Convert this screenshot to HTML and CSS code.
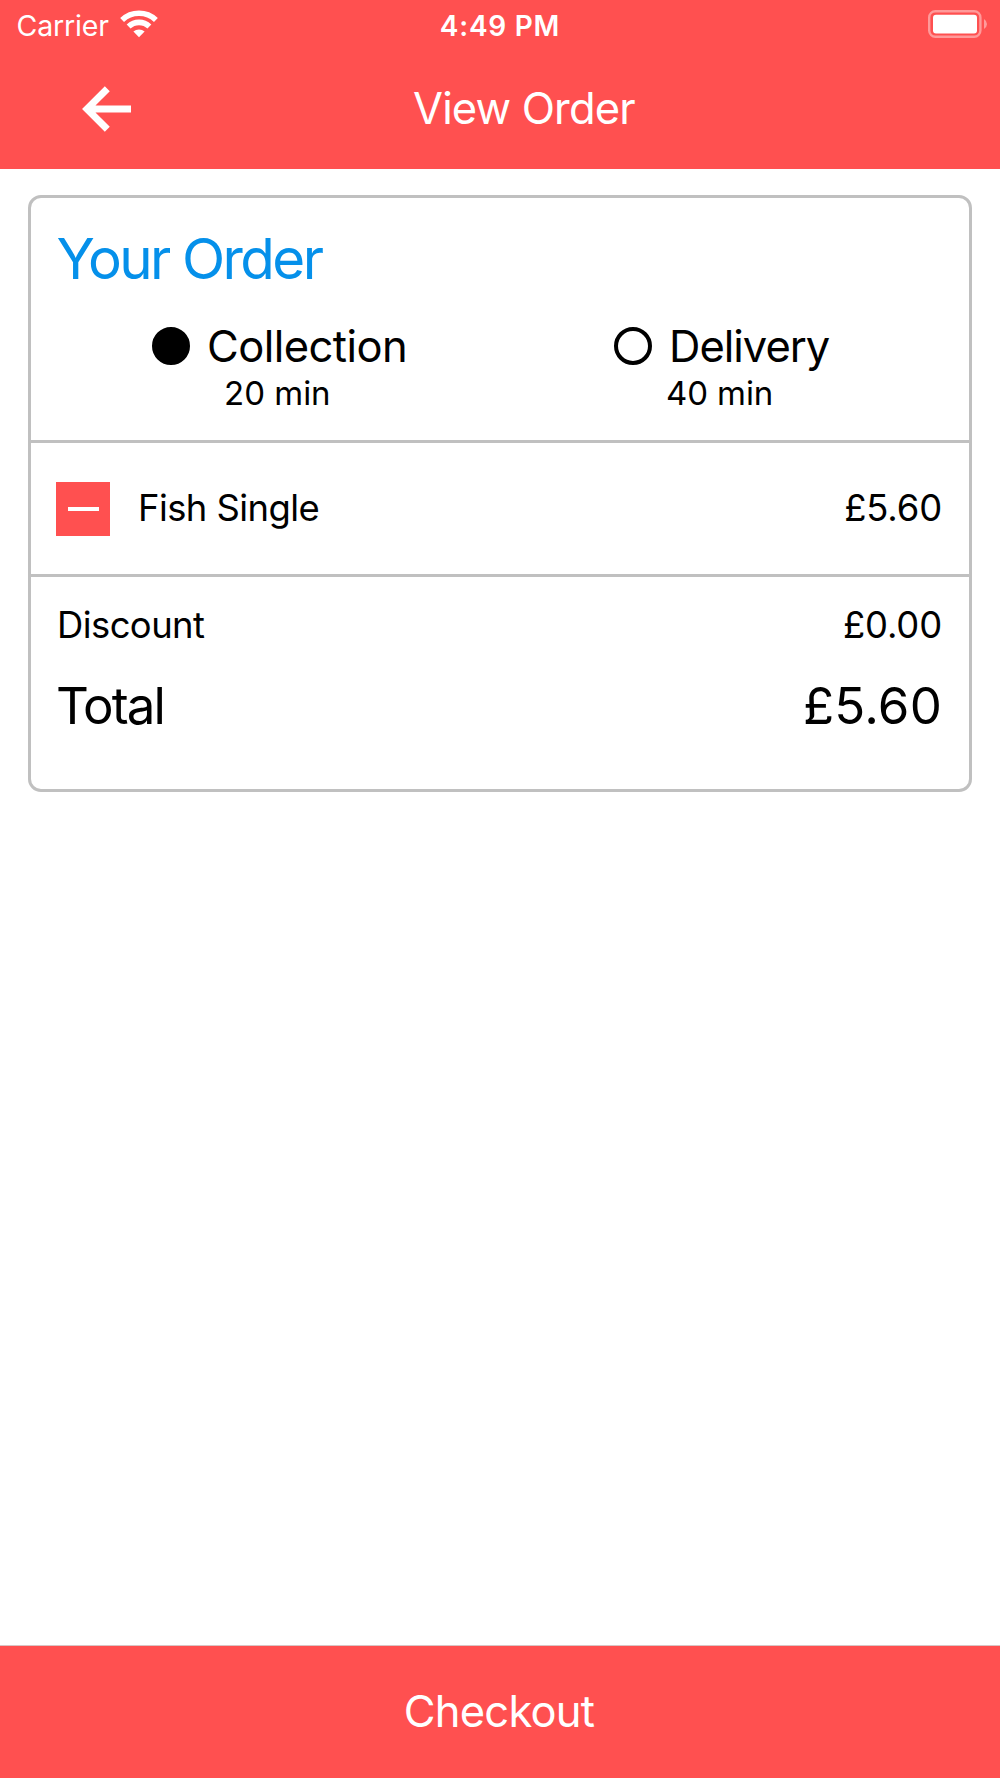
FILE: index.html
```html
<!DOCTYPE html>
<html lang="en">
<head>
  <meta charset="utf-8">
  <title>View Order</title>
  <link rel="stylesheet" href="styles.css">
</head>
<body>
  <div class="screen">
    <header class="header">
      <div class="status">
        <div class="status-left">
          <span class="carrier">Carrier</span>
          <svg class="wifi" width="38" height="28" viewBox="0 0 38 28" fill="none" stroke="#fff">
            <path d="M2.1 10 A24.6 24.6 0 0 1 35.9 10" stroke-width="5.6"/>
            <path d="M8.6 16.5 A15.2 15.2 0 0 1 29.4 16.5" stroke-width="5.6"/>
            <path d="M13.4 21.6 A8.2 8.2 0 0 1 24.6 21.6 L19 27.3 Z" fill="#fff" stroke="none"/>
          </svg>
        </div>
        <span class="time">4:49 PM</span>
        <svg class="battery" width="60" height="28" viewBox="0 0 60 28">
          <rect x="1.2" y="1.2" width="51.2" height="25.6" rx="6.2" fill="none" stroke="#ff9a9a" stroke-width="2.4"/>
          <rect x="5" y="4.8" width="44" height="18.6" rx="3" fill="#fff"/>
          <path d="M56 9 Q59 11 59 14 Q59 17 56 19 Z" fill="#ff9a9a"/>
        </svg>
      </div>
      <nav class="nav">
        <svg class="back" width="50" height="48" viewBox="0 0 50 48" fill="none" stroke="#fff" stroke-width="7">
          <path d="M49 24 H8 M25.3 3.7 L5 24 L25.3 44.3"/>
        </svg>
        <h1 class="title">View Order</h1>
      </nav>
    </header>

    <main class="content">
      <section class="card">
        <div class="method">
          <h2 class="heading">Your Order</h2>
          <div class="options">
            <div class="option">
              <div class="choice"><span class="radio radio-on"></span><span class="label">Collection</span></div>
              <div class="wait">20 min</div>
            </div>
            <div class="option option-delivery">
              <div class="choice"><span class="radio"></span><span class="label label-delivery">Delivery</span></div>
              <div class="wait wait-delivery">40 min</div>
            </div>
          </div>
        </div>
        <div class="item">
          <span class="remove"><span class="minus"></span></span>
          <span class="item-name">Fish Single</span>
          <span class="price">£5.60</span>
        </div>
        <div class="summary">
          <div class="line"><span>Discount</span><span class="price">£0.00</span></div>
          <div class="line total"><span class="total-label">Total</span><span class="total-price">£5.60</span></div>
        </div>
      </section>
    </main>

    <footer class="checkout">Checkout</footer>
  </div>
</body>
</html>
```
FILE: styles.css
```css
* { box-sizing: border-box; }

body {
  margin: 0;
  background: #fff;
  color: #000;
  font-family: Inter, "Liberation Sans", sans-serif;
}

.screen {
  display: flex;
  flex-direction: column;
  width: 1000px;
  height: 1778px;
}

.header {
  height: 169px;
  background: #ff5050;
  color: #fff;
}

.status {
  display: grid;
  grid-template-columns: 1fr auto 1fr;
  height: 50px;
  line-height: 52px;
}

.status-left { display: flex; padding-left: 16.5px; }
.carrier { width: 103px; font-size: 28.5px; letter-spacing: -0.15px; }
.wifi { margin-top: 10px; }
.time { font-size: 28px; font-weight: 600; letter-spacing: 0.75px; }
.battery { justify-self: end; margin: 10px 12px 0 0; }

.nav { display: flex; align-items: center; height: 117px; padding-left: 82px; }
.title {
  margin: 0 0 2px 281px;
  font-size: 43.5px;
  font-weight: 400;
  line-height: 60px;
  letter-spacing: -0.85px;
}

.content { flex: 1; padding: 26px 28px; }

.card {
  height: 597px;
  border: 3px solid #c0c0c0;
  border-radius: 13px;
}

.method { height: 245px; padding: 29px 26px 0; border-bottom: 3px solid #c0c0c0; }
.heading {
  margin: 0;
  color: #0590ea;
  font-size: 56.5px;
  font-weight: 400;
  line-height: 64px;
  letter-spacing: -2.6px;
  text-indent: -0.5px;
}

.options { display: grid; grid-template-columns: 462px 1fr; padding: 27px 0 0 95px; }
.choice { display: flex; align-items: center; gap: 17px; height: 55px; }
.radio { width: 38px; height: 38px; border: 4px solid #000; border-radius: 50%; }
.radio-on { background: #000; }
.label { font-size: 43.5px; letter-spacing: -0.55px; }
.label-delivery { letter-spacing: -1px; }
.wait { padding-left: 72px; font-size: 33px; line-height: 40px; letter-spacing: 0; }
.wait-delivery { padding-left: 52px; letter-spacing: -0.1px; }

.item {
  display: flex;
  align-items: center;
  height: 134px;
  padding: 0 27px 0 25px;
  border-bottom: 3px solid #c0c0c0;
  font-size: 36.4px;
  letter-spacing: -0.55px;
}
.remove { display: grid; place-items: center; width: 54px; height: 54px; background: #ff5050; }
.minus { width: 31px; height: 4px; background: #fff; }
.item-name { flex: 1; margin: 0 0 2px 28px; }
.item .price { margin-bottom: 2px; }
.price { font-size: 36.4px; letter-spacing: -0.15px; }

.summary { padding: 23px 27px 0 26px; font-size: 36.4px; letter-spacing: -0.55px; }
.line { display: flex; justify-content: space-between; line-height: 50px; }
.total { margin-top: 26px; font-size: 51px; line-height: 60px; }
.total-label { letter-spacing: -1.9px; text-indent: -1px; }
.total-price { letter-spacing: 0.2px; }

.checkout {
  height: 133px;
  border-top: 1px solid #d9c4c4;
  background: #ff5050;
  color: #fff;
  font-size: 43.5px;
  line-height: 131px;
  letter-spacing: -0.75px;
  text-align: center;
  text-indent: -2px;
}
```
